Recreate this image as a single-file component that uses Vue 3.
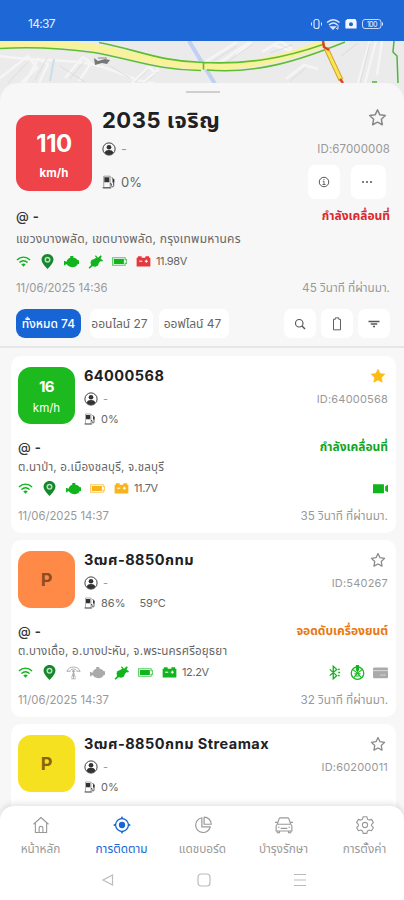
<script setup>
import { h } from 'vue'

const icons = {
  user: '<circle cx="12" cy="12" r="10.5" fill="none" stroke="currentColor" stroke-width="1.6"/><circle cx="12" cy="9" r="4"/><path d="M4.5 18.5c1-4 4-5 7.500-5s6.500 1 7.500 5c-4 5-11 5-15 0z"/>',
  fuel: '<path d="M3 2h11v20H3z" fill="none" stroke="currentColor" stroke-width="1.100" opacity=".7"/><path d="M4 4h8.500v8.500H4zM18 7h3v6h-3z"/><path d="M14 15h2v3c0 3 4 3 4 0V8l-3-4M1 22h15" fill="none" stroke="currentColor" stroke-width="1.500"/>',
  star: '<path d="M12 2.300l3 6.300 6.900.9-5 4.800 1.200 6.900-6.100-3.300-6.100 3.300 1.200-6.900-5-4.800 6.900-.9z" fill="none" stroke="currentColor" stroke-width="1.900" stroke-linejoin="round"/>',
  starFill: '<path d="M12 1.800l3.200 6.500 7.100.9-5.200 5 1.300 7.100-6.400-3.400-6.400 3.400 1.300-7.100-5.200-5 7.100-.9z" stroke="currentColor" stroke-linejoin="round"/>',
  info: '<circle cx="12" cy="12" r="9.500" fill="none" stroke="currentColor" stroke-width="2"/><path d="M9.500 10.500H12V17M9 17h6M12 6v2" fill="none" stroke="currentColor" stroke-width="1.800"/>',
  dots: '<circle cx="4" cy="12" r="2"/><circle cx="12" cy="12" r="2"/><circle cx="20" cy="12" r="2"/>',
  wifi: '<path d="M1.500 9.500c6-6 15-6 21 0M5.500 13.500c4-3.500 9-3.500 13 0" fill="none" stroke="currentColor" stroke-width="2.300"/><path d="M8.500 16.500c2-1.800 5-1.800 7 0L12 20.500z"/>',
  pin: '<path d="M12 0C6.500 0 2.500 4 2.500 9.300 2.500 15.500 12 24 12 24s9.500-8.500 9.500-14.700C21.500 4 17.500 0 12 0z"/><circle cx="12" cy="9" r="4.800" fill="#b9dfbd"/><circle cx="12" cy="9" r="2.400"/>',
  engine: '<path d="M10 3h5v3c4 .5 6 2 7 4h2v6h-2c-1 3-4 5-9 5-4 0-7-2-8.500-4.500H2.500V18H0v-7h2.500v1.500H4C5 9 7 7 10 6z"/>',
  plug: '<path d="M13.500 5.500L10 8l-4.500 1.500-1.500 4 1 4L1 22l1.500 1.500L7 19.500l5 1 4-2 1.500-4.500 3-3 2 1 1.500-1.500-4-3.500L22 3.500 20.500 2 16 6l-3.500-4L11 3.500z"/>',
  battery: '<path d="M1 6h20v3h2.500v6H21v3H1z" fill="none" stroke="currentColor" stroke-width="1.700" opacity=".7"/><path d="M3 8h16v8H3z"/>',
  car: '<path d="M3 3.500h6v2.500h6V3.500h6V6h2v14H1V6h2z"/><path d="M5 11.500h5M14 11.500h5M16.500 9v5" stroke="#fff" stroke-width="1.600"/>',
  tower: '<path d="M12 11v11M8.500 22h7M12 12l-3 8M12 12l3 8M2 10c1-9 19-9 20 0M6 11c1-6 11-6 12 0M1 10h5M18 10h5" fill="none" stroke="currentColor" stroke-width="1.500"/><circle cx="12" cy="10" r="2"/>',
  camera: '<path d="M0 5h17.500v14.500H0zM19.500 8.500L24 6v12l-4.500-2.500z"/>',
  bt: '<path d="M4.500 7l11 10-5.500 5V2l5.500 5-11 10M18 8l2-2M18 12h3M18 16l2 2" fill="none" stroke="currentColor" stroke-width="2.100"/>',
  driver: '<circle cx="12" cy="13" r="10" fill="none" stroke="currentColor" stroke-width="2"/><path d="M12 13L4 7M12 13l8-6M12 13l-6 7M12 13l6 7M7 14h10M8 17.500h8" fill="none" stroke="currentColor" stroke-width="1.700"/><path d="M9.500 0h5v8L12 12 9.500 8z"/>',
  card: '<rect y="4" width="24" height="17" rx="2"/><path d="M0 9h24" stroke="#ddd" stroke-width="1.500"/><path d="M12 16h9" stroke="#fff" stroke-width="1.200" stroke-dasharray="2 1"/>',
  search: '<circle cx="10.500" cy="10.500" r="7.500" fill="none" stroke="currentColor" stroke-width="2.300"/><path d="M15.500 15.500l6.500 6.500" stroke="currentColor" stroke-width="2.800"/>',
  phone: '<path d="M6 4h3V1.500h6V4h3v18H6z" fill="none" stroke="currentColor" stroke-width="1.600" stroke-linejoin="round"/>',
  filter: '<path d="M1 7h22M5.500 12h13M10 17h4" stroke="currentColor" stroke-width="2.700"/>',
  home: '<path d="M2 11L12 2l10 9M4.500 9.500V22h15V9.500M9.500 22v-6c0-3 5-3 5 0v6" fill="none" stroke="currentColor" stroke-width="1.500" stroke-linejoin="round"/>',
  track: '<circle cx="12" cy="12" r="8.500" fill="none" stroke="currentColor" stroke-width="1.600"/><circle cx="12" cy="12" r="4.200"/><path d="M12 0l2.200 4H9.800zM12 24l-2.200-4h4.400zM0 12l4-2.200v4.400zM24 12l-4 2.200V9.800z"/>',
  pie: '<path d="M10.500 2.300a9.900 9.900 0 1 0 11.200 12.200H10.500zM13.500 1.500V11H23c0-5-4-9.500-9.500-9.500z" fill="none" stroke="currentColor" stroke-width="1.600" stroke-linejoin="round"/>',
  vehicle: '<path d="M3 11l2.500-7.500c.3-.7.700-1 1.500-1h10c.8 0 1.200.3 1.500 1L21 11l1.500 2v7h-21v-7zM3 11h18M3 20v2.300h3V20M18 20v2.300h3V20M7.500 16.500h9M0 8.500h3M21 8.500h3M4 15h2M18 15h2" fill="none" stroke="currentColor" stroke-width="1.500" stroke-linejoin="round"/>',
  gear: '<path d="M9.500 1h5l.8 3.300 2.200 1.200 3.200-1 2.500 4.300-2.400 2.300v2l2.400 2.300-2.500 4.300-3.200-1-2.200 1.200-.8 3.300h-5l-.8-3.300-2.200-1.200-3.200 1L.8 15.400l2.400-2.300v-2L.8 8.800l2.500-4.300 3.200 1 2.200-1.200z" fill="none" stroke="currentColor" stroke-width="1.500" stroke-linejoin="round"/><circle cx="12" cy="12" r="3.500" fill="none" stroke="currentColor" stroke-width="1.400"/>',
}

const Icon = (props) =>
  h('svg', { viewBox: '0 0 24 24', width: props.size, height: props.size, fill: 'currentColor', innerHTML: icons[props.name] })
Icon.props = ['name', 'size']

const heroSignals = [
  ['wifi', 'green'], ['pin', 'deep'], ['engine', 'green'], ['plug', 'green'], ['battery', 'green'], ['car', 'red'],
]
const filters = [
  { label: 'ทั้งหมด 74', kind: 'all' },
  { label: 'ออนไลน์ 27', kind: 'online' },
  { label: 'ออฟไลน์ 47', kind: 'offline' },
]
const vehicles = [
  {
    name: '64000568', tone: 'go', speed: '16', id: 'ID:64000568', fav: true, fuel: '0%',
    status: 'กำลังเคลื่อนที่', place: 'ต.นาป่า, อ.เมืองชลบุรี, จ.ชลบุรี',
    signals: [['wifi', 'green'], ['pin', 'deep'], ['engine', 'green'], ['battery', 'amber'], ['car', 'amber']],
    volt: '11.7V', extras: [['camera', 'green']], time: '11/06/2025 14:37', ago: '35 วินาที ที่ผ่านมา.',
  },
  {
    name: '3ฒศ-8850กทม', tone: 'parked', id: 'ID:540267', fuel: '86%', temp: '59°C',
    status: 'จอดดับเครื่องยนต์', place: 'ต.บางเดื่อ, อ.บางปะหัน, จ.พระนครศรีอยุธยา',
    signals: [['wifi', 'green'], ['pin', 'deep'], ['tower', 'gray'], ['engine', 'gray'], ['plug', 'green'], ['battery', 'green'], ['car', 'green']],
    volt: '12.2V', extras: [['bt', 'green'], ['driver', 'green'], ['card', 'gray']], time: '11/06/2025 14:37', ago: '32 วินาที ที่ผ่านมา.',
  },
  { name: '3ฒศ-8850กทม Streamax', tone: 'idle', id: 'ID:60200011', fuel: '0%' },
]
const tabs = [
  { icon: 'home', label: 'หน้าหลัก' },
  { icon: 'track', label: 'การติดตาม', active: true },
  { icon: 'pie', label: 'แดชบอร์ด' },
  { icon: 'vehicle', label: 'บำรุงรักษา' },
  { icon: 'gear', label: 'การตั้งค่า' },
]
</script>

<template>
  <div class="screen">
    <header class="status">
      <span class="clock">14:37</span>
      <svg class="sys" width="74" height="14" viewBox="0 0 74 14" fill="none" stroke="#dbe7fb">
        <rect x="4" y="2.500" width="5" height="9" rx="2" stroke-width="1.200" /><path d="M1.500 5.500v3M11.500 5.500v3" />
        <path d="M17 5.500c4-3.500 8.500-3.500 12.500 0M19 8c3-2.500 6-2.500 8.500 0M21 10h4l-2 2z" stroke-width="1.500" /><path d="M28 8v4M26 11l2 1.500" />
        <path d="M36 4l2-1.500h7l1 2V11H36z" fill="#f3f7ff" stroke="#f3f7ff" stroke-width="1.200" stroke-linejoin="round" /><circle cx="41" cy="7.200" r="2" fill="#1e67d6" stroke="none" />
        <rect x="52.500" y="2.500" width="18.500" height="9" rx="2.500" stroke-width=".9" /><path d="M72.500 5.500v3" />
        <text x="61.800" y="9.500" text-anchor="middle" stroke="none" fill="#dbe7fb" font-family="Inter" font-size="7" font-weight="500">100</text>
      </svg>
    </header>

    <svg class="map" width="404" height="60" viewBox="0 41 404 60" fill="none">
      <rect y="41" width="404" height="60" fill="#ebebeb" />
      <path d="M0 78l28-22 9 12-16 15M25 83l13-24 10 5-9 19M65 78l18-21 8 6-12 18M132 83l17-16 8 7M144 82l15-13M205 62l32-20M218 64l31-22M236 55l16-13M262 52l18-11 12 8M273 45l18 6M286 79l18-14 14 4M358 83l12-42M365 83l11-42M382 41l-5 34M0 56c30 5 56 3 85 7s50 20 70 20" stroke="#f5f5f5" stroke-width="2.500" />
      <path d="M8 83l20-21M35 80l12-22M70 79l14-17M135 82l14-13M145 83l13-11M207 65l30-19M223 65l30-21M270 53l22-8M290 81l16-13M360 83l10-40M341 56l17-13M60 66l25 16M110 66l20 12" stroke="#d6d8da" stroke-width=".8" />
      <path d="M50 81l4-22" stroke="#cadee9" stroke-width="2" />
      <path d="M189 41l26 43" stroke="#bed0f3" stroke-width="4" />
      <path d="M0 44.500c37-1 65-1 94 3 39 7 65 17 100 18 48 3 86-5 132-23" stroke="#f8f29a" stroke-width="7" />
      <path d="M0 48.500c37-2 65 0 94 4 39 7 65 18 107 18M99 42.500c38 7 60 19 104 20 44 2 80-4 120-18M207 70c50 4 91-9 138-28M203.500 62.500v7" stroke="#5fbd32" stroke-width="1.600" />
      <path d="M326 48l15 32" stroke="#ce9a2b" stroke-width="5" /><path d="M326 48l15 32" stroke="#f7e653" stroke-width="3" />
      <path d="M323 41l1 6 5 3M340 79l3 4" stroke="#df4028" stroke-width="2.500" />
      <path d="M394 41l-1 11 4 4 1 27M372 82h5" stroke="#4fb53c" stroke-width="1.500" />
      <path d="M94 58l4 3 7-2 5 1-3 4-5-1-7 2z" fill="#777" /><path d="M98 58h9" stroke="#888" />
    </svg>

    <section class="sheet">
      <div class="handle"></div>
      <div class="hero">
        <div class="badge stop big"><b>110</b><span>km/h</span></div>
        <div class="facts">
          <div class="row name"><h1>2035 เจริญ</h1><Icon name="star" size="19" class="muted" /></div>
          <div class="row driver"><span class="pair"><Icon name="user" size="14" /><span class="dash">-</span></span><span class="id">ID:67000008</span></div>
          <div class="row tank">
            <span class="pair"><Icon name="fuel" size="14" />0%</span>
            <span class="actions"><button><Icon name="info" size="12" /></button><button><Icon name="dots" size="12" /></button></span>
          </div>
        </div>
      </div>
      <div class="row at"><span><span class="sign">@</span> -</span><span class="state red">กำลังเคลื่อนที่</span></div>
      <div class="row place">แขวงบางพลัด, เขตบางพลัด, กรุงเทพมหานคร</div>
      <div class="row signals">
        <span class="icons"><Icon v-for="[n, c] in heroSignals" :key="n" :name="n" size="15" :class="c" /><em>11.98V</em></span>
      </div>
      <div class="row when"><span>11/06/2025 14:36</span><span class="ago">45 วินาที ที่ผ่านมา.</span></div>
      <div class="filters">
        <span v-for="f in filters" :key="f.kind" class="chip" :class="f.kind">{{ f.label }}</span>
        <span class="tools">
          <button><Icon name="search" size="12" /></button><button><Icon name="phone" size="14" /></button><button><Icon name="filter" size="12" /></button>
        </span>
      </div>
    </section>

    <main class="list">
      <article v-for="v in vehicles" :key="v.name" class="card">
        <div class="top">
          <div class="badge" :class="v.tone">
            <template v-if="v.speed"><b>{{ v.speed }}</b><span>km/h</span></template>
            <strong v-else>P</strong>
          </div>
          <div class="facts">
            <div class="row name"><h2>{{ v.name }}</h2><Icon :name="v.fav ? 'starFill' : 'star'" size="16" :class="v.fav ? 'gold' : 'muted'" /></div>
            <div class="row driver"><span class="pair"><Icon name="user" size="14" /><span class="dash">-</span></span><span class="id">{{ v.id }}</span></div>
            <div class="row tank"><span class="pair"><Icon name="fuel" size="12" />{{ v.fuel }}<span v-if="v.temp" class="temp">{{ v.temp }}</span></span></div>
          </div>
        </div>
        <template v-if="v.status">
          <div class="row at"><span><span class="sign">@</span> -</span><span class="state" :class="v.tone">{{ v.status }}</span></div>
          <div class="row place">{{ v.place }}</div>
          <div class="row signals">
            <span class="icons"><Icon v-for="[n, c] in v.signals" :key="n" :name="n" size="15" :class="c" /><em>{{ v.volt }}</em></span>
            <span class="icons extras"><Icon v-for="[n, c] in v.extras" :key="n" :name="n" size="15" :class="c" /></span>
          </div>
          <div class="row when"><span>{{ v.time }}</span><span class="ago">{{ v.ago }}</span></div>
        </template>
      </article>
    </main>

    <footer class="dock">
      <nav class="tabs">
        <a v-for="t in tabs" :key="t.icon" :class="{ active: t.active }"><Icon :name="t.icon" size="18" /><span>{{ t.label }}</span></a>
      </nav>
      <div class="keys">
        <svg width="14" height="14" viewBox="0 0 14 14"><path d="M11.500 2v10L2 7z" /></svg>
        <svg width="14" height="14" viewBox="0 0 14 14"><rect x="1" y="1" width="12" height="12" rx="3" /></svg>
        <svg width="14" height="14" viewBox="0 0 14 14"><path d="M1 1.500h12M1 7h12M1 12.500h12" /></svg>
      </div>
    </footer>
  </div>
</template>

<style>
body { margin: 0; background: #f7f7f7; overflow: hidden; }
</style>

<style scoped>
.screen { width: 404px; height: 900px; overflow: hidden; display: flex; flex-direction: column; background: #f7f7f7; font-family: Inter, "Noto Sans Thai", "Noto Sans", sans-serif; color: #666; box-sizing: border-box; }
.screen * { box-sizing: border-box; }
svg { display: block; flex: none; }
.status { height: 41px; flex: none; background: #1e67d6; display: flex; justify-content: space-between; align-items: flex-end; padding: 0 20px 10px 28px; color: #e6efff; font-size: 12px; line-height: 14px; letter-spacing: -.7px; }
.map { height: 60px; }
.sheet { flex: none; height: 265px; margin-top: -18px; background: #f7f7f7; border-radius: 18px 18px 0 0; padding: 0 14px 0 16px; border-bottom: 2px solid #e6e6e6; position: relative; }
.handle { width: 34px; height: 2px; background: #cfcfcf; margin: 0 auto; transform: translateY(8px); }
.hero { display: flex; gap: 10px; padding-top: 20px; height: 119px; }
.row { display: flex; justify-content: space-between; align-items: center; white-space: nowrap; }
.facts { flex: 1; min-width: 0; }
.badge { flex: none; display: flex; flex-direction: column; align-items: center; color: #fff; width: 57px; height: 57px; border-radius: 13px; padding-top: 11px; }
.badge b { font-size: 15px; line-height: 17px; letter-spacing: -.5px; }
.badge span { font-size: 11.5px; line-height: 14px; margin-top: 6px; }
.badge strong { font-size: 18px; line-height: 35px; color: #8d4d20; }
.big { width: 76px; height: 76px; margin-top: 10px; padding-top: 16px; background: #ee4348; }
.big b { font-size: 24px; line-height: 26px; letter-spacing: -.5px; }
.big span { font-weight: 700; font-size: 11.5px; margin-top: 9px; }
.badge.go { background: #1cb91f; }
.badge.parked { background: #ff8a48; }
.badge.idle { background: #f5e120; }
.badge.idle strong { color: #87630e; }
.name h1, .name h2 { margin: 0; color: #202124; font-weight: 700; }
.name h1 { font-size: 22px; line-height: 32px; letter-spacing: .5px; }
.name h2 { font-size: 14.5px; line-height: 24px; letter-spacing: .45px; }
.pair { display: flex; align-items: center; gap: 5px; font-size: 13px; }
.pair svg { color: #333; }
.dash { color: #999; }
.id { color: #999; font-size: 11px; letter-spacing: .2px; }
.hero .id { font-size: 11.5px; letter-spacing: .1px; }
.hero .name { height: 30px; padding-right: 3px; }
.hero .name svg { transform: translateY(-3px); }
.hero .driver { height: 28px; }
.hero .tank { height: 38px; }
.actions { display: flex; gap: 11px; padding-right: 4px; }
button { font: inherit; border: 0; padding: 0; background: #fff; border-radius: 7px; display: grid; place-items: center; color: #555; width: 32px; height: 29px; }
.actions button { width: 32px; height: 34px; }
.actions button:last-child { width: 35px; padding-right: 3px; }
.at { height: 24px; font-size: 13px; font-weight: 700; color: #333; word-spacing: 1px; }
.sign { font-weight: 500; }
.state { font-size: 12px; }
.state.red { color: #dc282d; }
.state.go { color: #12a51b; }
.state.parked { color: #e87812; }
.place { height: 22px; font-size: 11.6px; letter-spacing: .17px; }
.sheet .place { font-size: 12px; letter-spacing: .2px; }
.signals { height: 22px; }
.icons { display: flex; align-items: center; gap: 9px; }
.icons em { font-style: normal; font-size: 11px; letter-spacing: -.4px; margin-left: -4px; }
.when { height: 32px; color: #999; font-size: 11.3px; }
.ago { font-size: 11.7px; }
.green { color: #10b41c; }
.deep { color: #15872c; }
.red { color: #e5383c; }
.amber { color: #f7b51b; }
.gray { color: #aaa; }
.gold { color: #fcbd13; }
.muted { color: #888; }
.filters { display: flex; align-items: center; gap: 6px; padding-top: 5px; }
.chip { height: 29px; border-radius: 7px; background: #fff; display: grid; place-items: center; font-size: 12px; white-space: nowrap; }
.all { width: 65px; background: #1765d4; color: #fff; font-weight: 500; border-radius: 9px; margin-right: 3px; }
.online { width: 63px; padding-right: 4px; }
.offline { width: 70px; padding-right: 3px; }
.tools { display: flex; gap: 5px; margin-left: auto; }
.list { flex: 1; min-height: 0; padding: 8px 8px 0 11px; display: flex; flex-direction: column; gap: 7px; }
.card { flex: none; height: 177px; background: #fff; border-radius: 10px; padding: 8px 8px 0 7px; }
.top { display: flex; gap: 9px; height: 71px; }
.top .badge { margin-top: 3px; }
.card .name { height: 24px; padding-right: 2px; }
.card .driver { height: 22px; }
.card .tank { height: 18px; }
.card .pair { font-size: 11px; }
.card .at { height: 23px; }
.card .place { height: 18px; }
.card .signals { height: 24px; }
.temp { margin-left: 9px; }
.extras { gap: 8px; }
.dock { flex: none; position: relative; height: 94px; background: #fff; border-radius: 14px 14px 0 0; box-shadow: 0 -2px 6px #0000001f; }
.tabs { display: flex; padding: 10px 0 0; height: 60px; }
.tabs a { width: 81px; flex: none; display: flex; flex-direction: column; align-items: center; gap: 5px; color: #999; font-size: 11.8px; line-height: 20px; white-space: nowrap; }
.tabs .active { color: #1765d4; }
.keys { display: flex; justify-content: center; gap: 82px; padding: 7px 0 0 4px; }
.keys svg { fill: none; stroke: #bbb; stroke-width: 1.2; }
</style>
